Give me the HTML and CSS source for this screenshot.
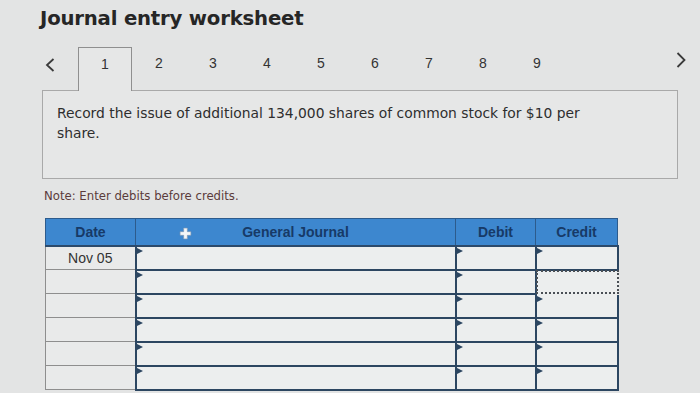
FILE: index.html
```html
<!DOCTYPE html>
<html>
<head>
  <meta charset="utf-8">
  <title>Journal entry worksheet</title>
  <link rel="stylesheet" href="styles.css">
</head>
<body>
  <h1 class="title">Journal entry worksheet</h1>

  <div class="tabs">
    <span class="arrow prev">
      <svg viewBox="0 0 10 14"><path d="M8.5 1L2 7l6.5 6" /></svg>
    </span>
    <span class="tab active">1</span>
    <span class="tab">2</span>
    <span class="tab">3</span>
    <span class="tab">4</span>
    <span class="tab">5</span>
    <span class="tab">6</span>
    <span class="tab">7</span>
    <span class="tab">8</span>
    <span class="tab">9</span>
    <span class="arrow next">
      <svg viewBox="0 0 10 16"><path d="M1.5 1l7 7-7 7" /></svg>
    </span>
  </div>

  <div class="panel">
    <p>Record the issue of additional 134,000 shares of common stock for $10 per share.</p>
  </div>

  <p class="note">Note: Enter debits before credits.</p>

  <table class="journal">
    <colgroup>
      <col class="c-date">
      <col class="c-acct">
      <col class="c-num">
      <col class="c-num2">
    </colgroup>
    <thead>
      <tr>
        <th>Date</th>
        <th class="acct-head">
          <svg class="plus" viewBox="0 0 12 12">
            <path d="M4.3 1h3.4v3.3H11v3.4H7.7V11H4.3V7.7H1V4.3h3.3z" />
          </svg>
          General Journal
        </th>
        <th>Debit</th>
        <th>Credit</th>
      </tr>
    </thead>
    <tbody>
      <tr>
        <td class="date">Nov 05</td>
        <td class="in"></td>
        <td class="in"></td>
        <td class="in"></td>
      </tr>
      <tr>
        <td class="date"></td>
        <td class="in"></td>
        <td class="in"></td>
        <td class="focus"></td>
      </tr>
      <tr>
        <td class="date"></td>
        <td class="in"></td>
        <td class="in"></td>
        <td class="in"></td>
      </tr>
      <tr>
        <td class="date"></td>
        <td class="in"></td>
        <td class="in"></td>
        <td class="in"></td>
      </tr>
      <tr>
        <td class="date"></td>
        <td class="in"></td>
        <td class="in"></td>
        <td class="in"></td>
      </tr>
      <tr>
        <td class="date"></td>
        <td class="in"></td>
        <td class="in"></td>
        <td class="in"></td>
      </tr>
    </tbody>
  </table>
</body>
</html>
```

FILE: styles.css
```css
* {
  margin: 0;
  padding: 0;
  box-sizing: border-box;
}

body {
  background: #e3e4e4;
  color: #2b2b2b;
  font-family: "DejaVu Sans", Verdana, sans-serif;
  overflow: hidden;
}

.title {
  font-size: 19.7px;
  font-weight: bold;
  color: #262626;
  margin: 7px 0 0 40px;
  line-height: 24px;
  letter-spacing: -0.2px;
}

.tabs {
  display: flex;
  align-items: flex-end;
  height: 43px;
  margin-top: 16px;
  padding-left: 42px;
  font-family: "Liberation Sans", Arial, sans-serif;
  font-size: 14px;
  color: #333;
}

.tab {
  width: 54px;
  height: 43px;
  text-align: center;
  line-height: 32px;
  position: relative;
  z-index: 1;
}

.tab.active {
  border: 1px solid #8f8f8f;
  border-bottom: none;
  background: #e6e7e7;
  height: 44px;
  margin-bottom: -1px;
}

.arrow {
  display: flex;
  height: 43px;
}

.arrow svg {
  fill: none;
  stroke: #3a3a3a;
  stroke-width: 1.8;
}

.prev {
  width: 36px;
  padding: 11px 0 0 3px;
}

.prev svg {
  width: 10px;
  height: 14px;
}

.next {
  margin-left: auto;
  margin-right: 14px;
  padding-top: 5px;
}

.next svg {
  width: 10px;
  height: 16px;
}

.panel {
  margin-left: 42px;
  width: 636px;
  height: 89px;
  border: 1px solid #a9a9a9;
  background: #e6e7e7;
  padding: 12px 0 0 14px;
}

.panel p {
  font-family: "DejaVu Sans", Verdana, sans-serif;
  font-size: 13.85px;
  line-height: 20px;
  color: #2e2e2e;
  max-width: 560px;
}

.note {
  font-family: "DejaVu Sans Condensed", "DejaVu Sans", sans-serif;
  font-size: 13px;
  line-height: 16px;
  color: #5b3b3b;
  margin: 9px 0 0 44px;
}

.journal {
  margin: 14px 0 0 45px;
  border-collapse: collapse;
  table-layout: fixed;
  width: 572px;
  font-family: "Liberation Sans", Arial, sans-serif;
  font-size: 14px;
}

.c-date { width: 90px; }
.c-acct { width: 320px; }
.c-num { width: 80px; }
.c-num2 { width: 82px; }

.journal th {
  background: #3d87cf;
  color: #173a67;
  font-weight: bold;
  font-size: 14px;
  height: 27px;
  border: 1px solid #2d5b8c;
  border-bottom: 2px solid #2c4a6b;
}

.acct-head {
  position: relative;
}

.plus {
  position: absolute;
  left: 43px;
  top: 8px;
  width: 13px;
  height: 13px;
  fill: #f4f6f8;
  stroke: #7f98b3;
  stroke-width: 0.6;
}

.journal td {
  height: 24px;
  position: relative;
}

.date {
  background: #e9eaea;
  border: 1px solid #8e8e8e;
  text-align: center;
  color: #333;
}

.in {
  background: #eceeee;
  border: 2px solid #2c4661;
}

.in::before {
  content: "";
  position: absolute;
  left: 0;
  top: 1px;
  border-left: 6px solid #2c4661;
  border-top: 3px solid transparent;
  border-bottom: 3px solid transparent;
}

.focus {
  background: #eceeee;
  border: 2px solid #eceeee;
}

.focus::after {
  content: "";
  position: absolute;
  z-index: 2;
  inset: -1px -2px -1px -1px;
  border: 2px dotted #4a4f55;
}
```
